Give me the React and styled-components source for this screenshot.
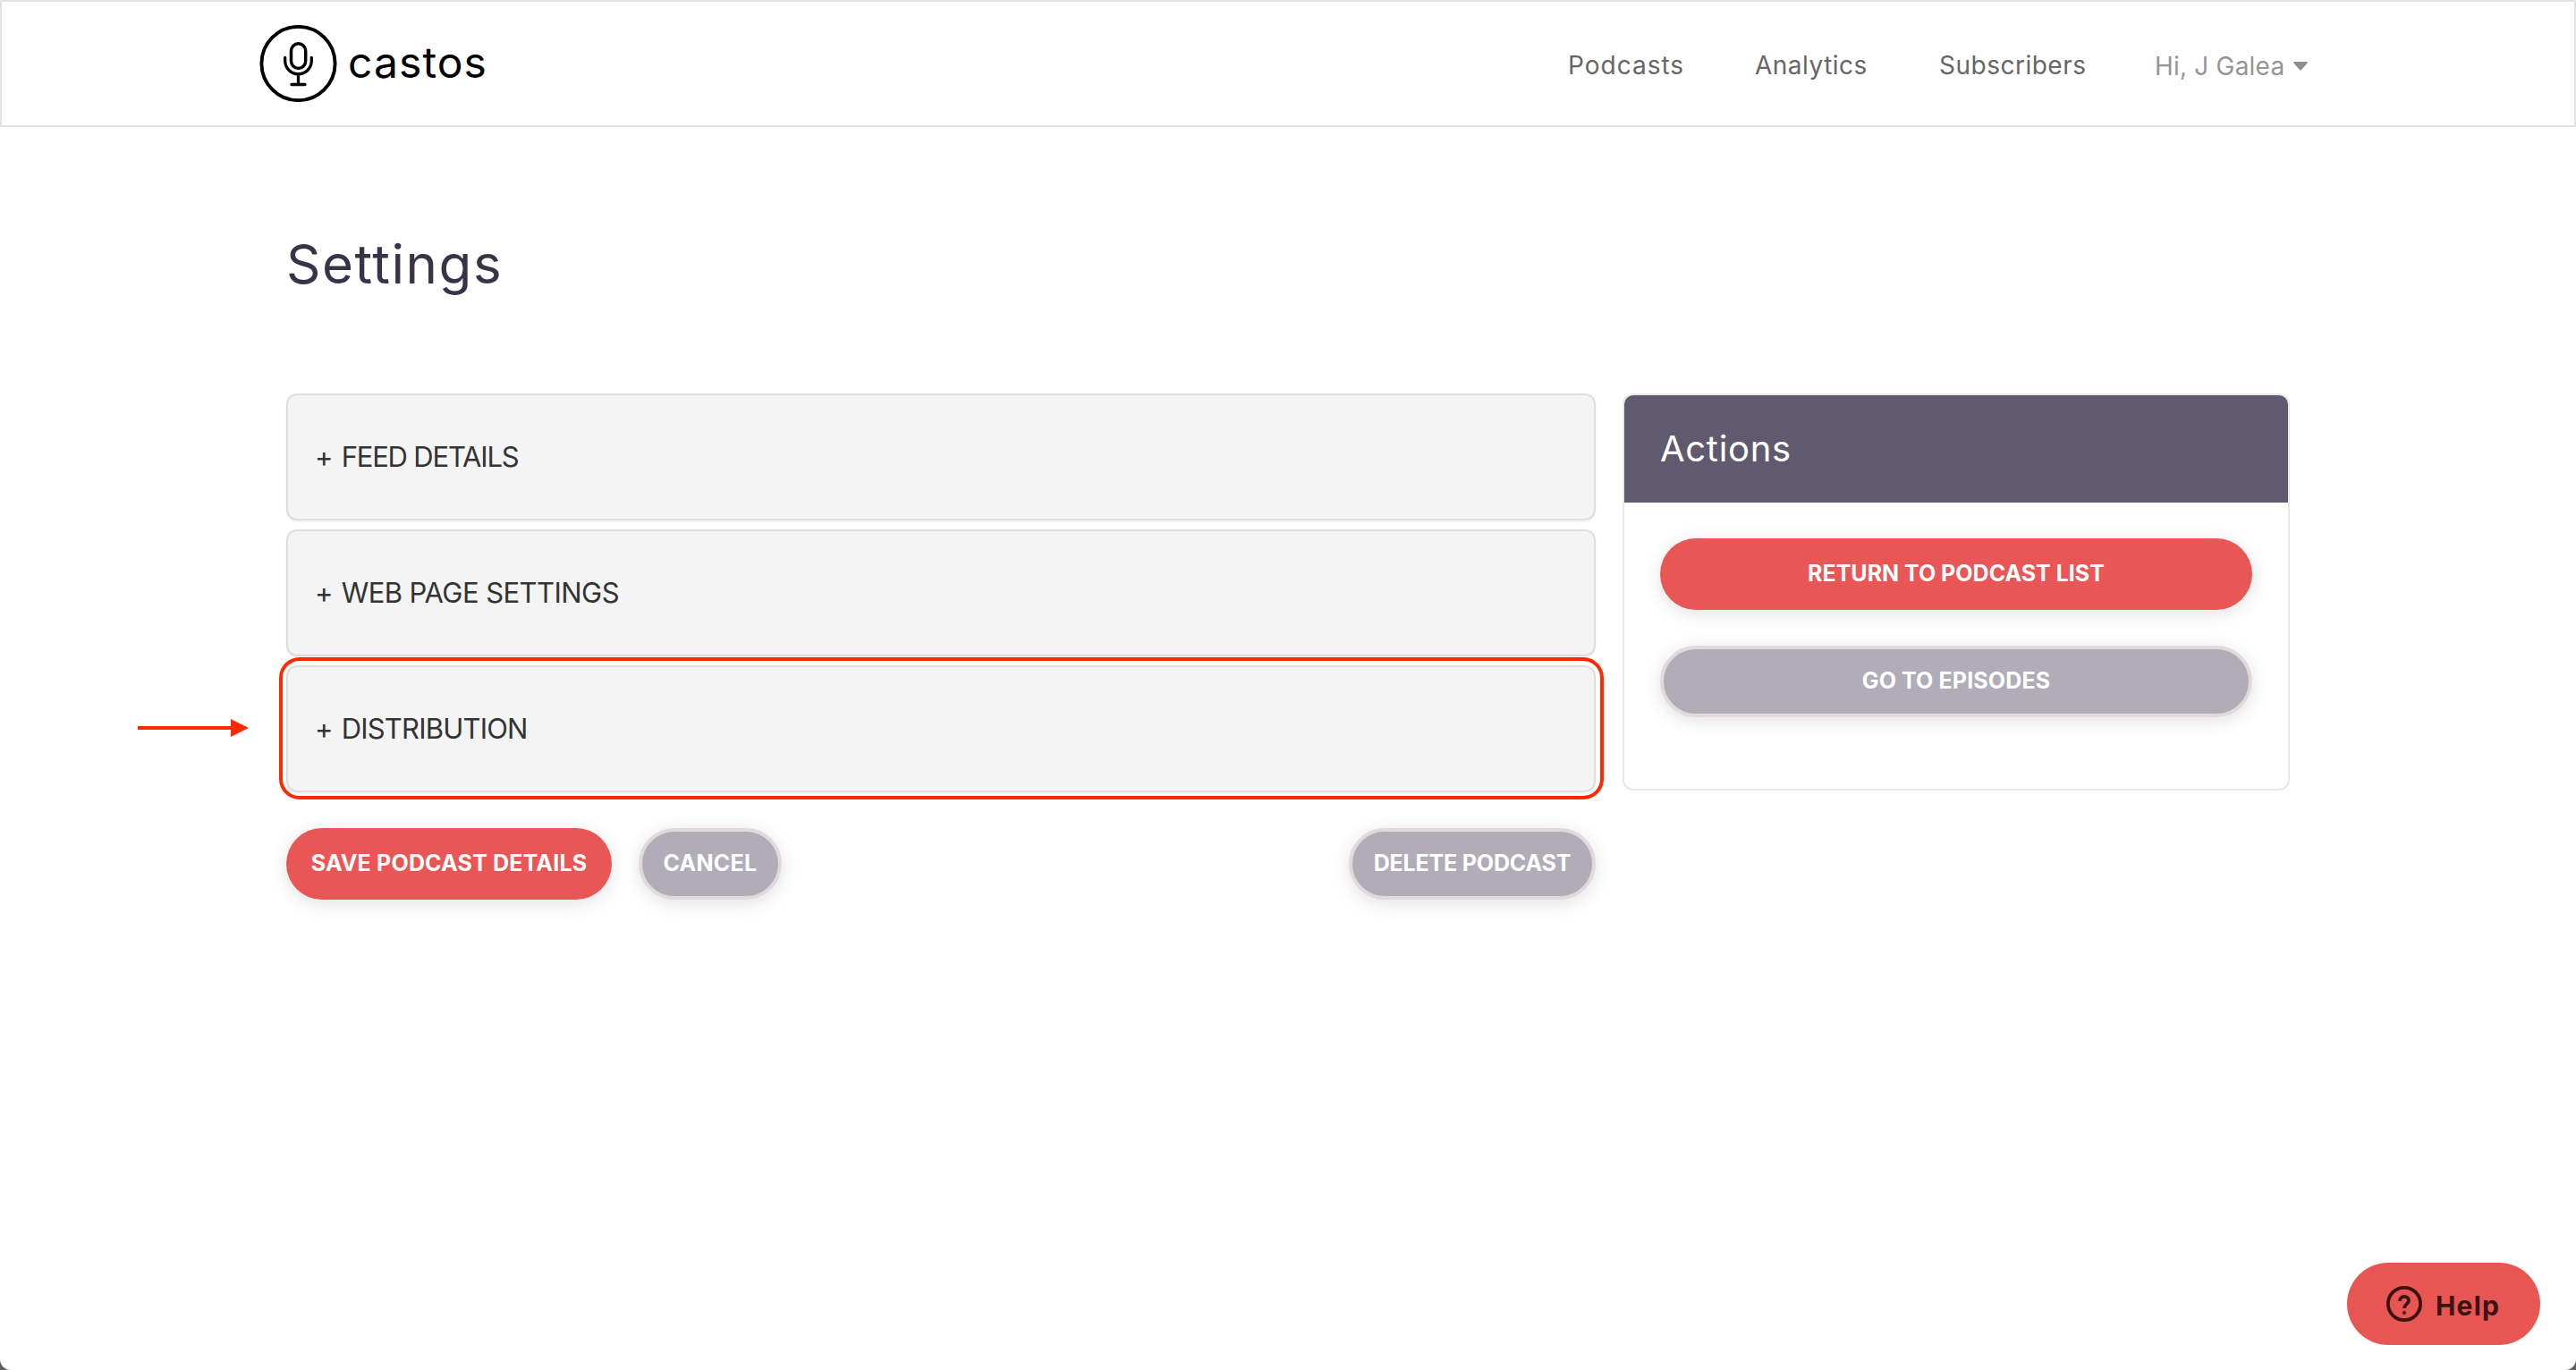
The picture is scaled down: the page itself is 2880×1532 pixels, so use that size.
import React from 'react';
import styled, { createGlobalStyle } from 'styled-components';

const GlobalStyle = createGlobalStyle`
    * {
        box-sizing: border-box;
        margin: 0;
        padding: 0;
    }

    body {
        background-color: #606060;
        font-family: Inter, 'Open Sans', sans-serif;
    }
`
const Page = styled.div`
    width: 2880px;
    height: 1532px;
    background-color: #fff;
    border-radius: 0 0 12px 12px;
    overflow: hidden;
`
const Header = styled.header`
    height: 142px;
    border: 2px solid #e3e3e3;
    background-color: #fff;
    display: flex;
    align-items: center;
    justify-content: space-between;
    padding: 0 298px 0 288px;
`
const Logo = styled.a`
    display: flex;
    align-items: center;
    height: 86px;
    gap: 12px;
    color: #000;
`
const LogoName = styled.span`
    font-size: 48px;
    line-height: 60px;
    letter-spacing: 1.08px;
    padding-bottom: 3px;
`
const Nav = styled.nav`
    display: flex;
    align-items: center;
    padding-top: 3px;
`
const NavLink = styled.a`
    width: ${({ width }) => width};
    font-size: 28px;
    line-height: 40px;
    letter-spacing: ${({ spacing }) => spacing};
    color: #666;
    white-space: nowrap;
`
const UserMenu = styled(NavLink)`
    display: flex;
    align-items: center;
    justify-content: space-between;
    color: #959595;
    padding-top: 3px;
`
const Container = styled.main`
    width: 2240px;
    margin-left: 320px;
`
const Title = styled.h1`
    color: #3a3348;
    font-size: 60px;
    font-weight: 400;
    line-height: 80px;
    letter-spacing: 1.55px;
    margin: 113px 0 105px;
`
const Columns = styled.div`
    display: flex;
    align-items: flex-start;
    gap: 30px;
`
const Sections = styled.section`
    width: 1464px;
    display: flex;
    flex-direction: column;
    gap: 10px;
`
const Panel = styled.div`
    position: relative;
    height: 142px;
    display: flex;
    align-items: center;
    padding-left: 30px;
    background-color: #f4f4f4;
    border: 2px solid #ddd;
    border-radius: 12px;
    box-shadow: 0 2px 2px rgba(0, 0, 0, 0.05);
`
const PanelTitle = styled.h3`
    font-size: 31px;
    font-weight: 400;
    line-height: 46px;
    letter-spacing: ${({ spacing }) => spacing};
    color: #333;
    white-space: pre;
`
const Plus = styled.span`
    letter-spacing: 0.2px;
`
// red frame drawn over the distribution panel
const Highlight = styled.div`
    position: absolute;
    top: -11px;
    right: -11px;
    bottom: -10px;
    left: -10px;
    border: 4px solid #ff2a00;
    border-radius: 23px;
`
const Arrow = styled.svg`
    position: absolute;
    left: -168px;
    top: 58px;
`
const ButtonRow = styled.div`
    display: flex;
    align-items: center;
    gap: 30px;
    margin-top: 30px;
`
const Button = styled.button`
    width: ${({ width }) => width};
    height: 80px;
    margin-left: ${({ push }) => push ? 'auto' : '0'};
    padding-bottom: 2px;
    border: ${({ variant }) => variant === 'primary' ? 'none' : '4px solid #e1d9db'};
    border-radius: 40px;
    background-color: ${({ variant }) => variant === 'primary' ? '#e95656' : '#b0adb9'};
    box-shadow: 0 4px 20px rgba(0, 0, 0, 0.12);
    color: #fff;
    font-family: inherit;
    font-size: 25px;
    font-weight: 700;
    letter-spacing: ${({ spacing }) => spacing};
    white-space: nowrap;
`
const ActionsCard = styled.aside`
    width: 746px;
    height: 444px;
    border: 2px solid #ebe6e8;
    border-radius: 12px;
    background-color: #fff;
    overflow: hidden;
`
const ActionsTitle = styled.h2`
    height: 120px;
    padding-left: 40px;
    background-color: #5f5a70;
    color: #fff;
    font-size: 40px;
    font-weight: 400;
    line-height: 120px;
    letter-spacing: 0.7px;
`
const ActionsBody = styled.div`
    display: flex;
    flex-direction: column;
    gap: 40px;
    padding: 40px;
`
const HelpButton = styled.button`
    position: fixed;
    right: 40px;
    bottom: 28px;
    width: 216px;
    height: 92px;
    display: flex;
    align-items: center;
    gap: 15px;
    padding-left: 44px;
    border: none;
    border-radius: 46px;
    background-color: #e75653;
    color: #3e1113;
    font-family: inherit;
`
const HelpLabel = styled.span`
    font-size: 30px;
    font-weight: 700;
    letter-spacing: 1.2px;
    padding-top: 3px;
`

const links = [
    { label: 'Podcasts', width: '209px', spacing: '1px' },
    { label: 'Analytics', width: '206px', spacing: '0.5px' },
    { label: 'Subscribers', width: '241px', spacing: '0.5px' },
]

function MicLogo() {
    return (
        <svg width="87" height="86" viewBox="0 0 87 86" fill="none" stroke="#000" strokeWidth="3.5" strokeLinecap="round">
            <circle cx="43.5" cy="43" r="41.1" strokeWidth="3.9" />
            <rect x="35.5" y="20.8" width="16.2" height="27.6" rx="8.1" />
            <path d="M28.7 36.5V40a14.8 14.8 0 0 0 29.6 0V36.5M43.5 55V66M36 66.5H51" strokeWidth="3.3" />
        </svg>
    )
}

function HelpIcon() {
    return (
        <svg width="40" height="40" viewBox="0 0 40 40" fill="none" stroke="#3e1113">
            <circle cx="20" cy="20" r="18.1" strokeWidth="3.8" />
            <path d="M15 16.9C15 13.9 17.1 11.9 20 11.9S25 13.8 25 16.6C25 20 20 20.4 20 25" strokeWidth="3.8" />
            <circle cx="20" cy="30" r="2.1" fill="#3e1113" stroke="none" />
        </svg>
    )
}

export default function App() {
    return (
        <>
            <GlobalStyle />
            <Page>
                <Header>
                    <Logo>
                        <MicLogo />
                        <LogoName>castos</LogoName>
                    </Logo>
                    <Nav>
                        {links.map(({ label, width, spacing }) => (
                            <NavLink key={label} width={width} spacing={spacing}>{label}</NavLink>
                        ))}
                        <UserMenu width="171px" spacing="0.2px">
                            Hi, J Galea
                            <svg width="16" height="10" viewBox="0 0 16 10">
                                <path d="M1 0H15Q16.4 0.6 15.4 1.9L9 8.9Q8 9.9 7 8.9L0.6 1.9Q-0.4 0.6 1 0Z" fill="#8f8f8f" />
                            </svg>
                        </UserMenu>
                    </Nav>
                </Header>
                <Container>
                    <Title>Settings</Title>
                    <Columns>
                        <Sections>
                            <Panel>
                                <PanelTitle spacing="-1.2px"><Plus>+ </Plus>FEED DETAILS</PanelTitle>
                            </Panel>
                            <Panel>
                                <PanelTitle spacing="-0.55px"><Plus>+ </Plus>WEB PAGE SETTINGS</PanelTitle>
                            </Panel>
                            <Panel>
                                <PanelTitle spacing="-0.8px"><Plus>+ </Plus>DISTRIBUTION</PanelTitle>
                                <Highlight />
                                <Arrow width="124" height="20" viewBox="0 0 124 20" fill="#ff2a00">
                                    <path d="M0 8H104V0L124 10L104 20V12H0Z" />
                                </Arrow>
                            </Panel>
                            <ButtonRow>
                                <Button variant="primary" width="364px" spacing="0.18px">SAVE PODCAST DETAILS</Button>
                                <Button width="160px" spacing="0.26px">CANCEL</Button>
                                <Button width="276px" spacing="-0.18px" push>DELETE PODCAST</Button>
                            </ButtonRow>
                        </Sections>
                        <ActionsCard>
                            <ActionsTitle>Actions</ActionsTitle>
                            <ActionsBody>
                                <Button variant="primary" width="100%" spacing="0">RETURN TO PODCAST LIST</Button>
                                <Button width="100%" spacing="0.13px">GO TO EPISODES</Button>
                            </ActionsBody>
                        </ActionsCard>
                    </Columns>
                </Container>
                <HelpButton>
                    <HelpIcon />
                    <HelpLabel>Help</HelpLabel>
                </HelpButton>
            </Page>
        </>
    )
}
